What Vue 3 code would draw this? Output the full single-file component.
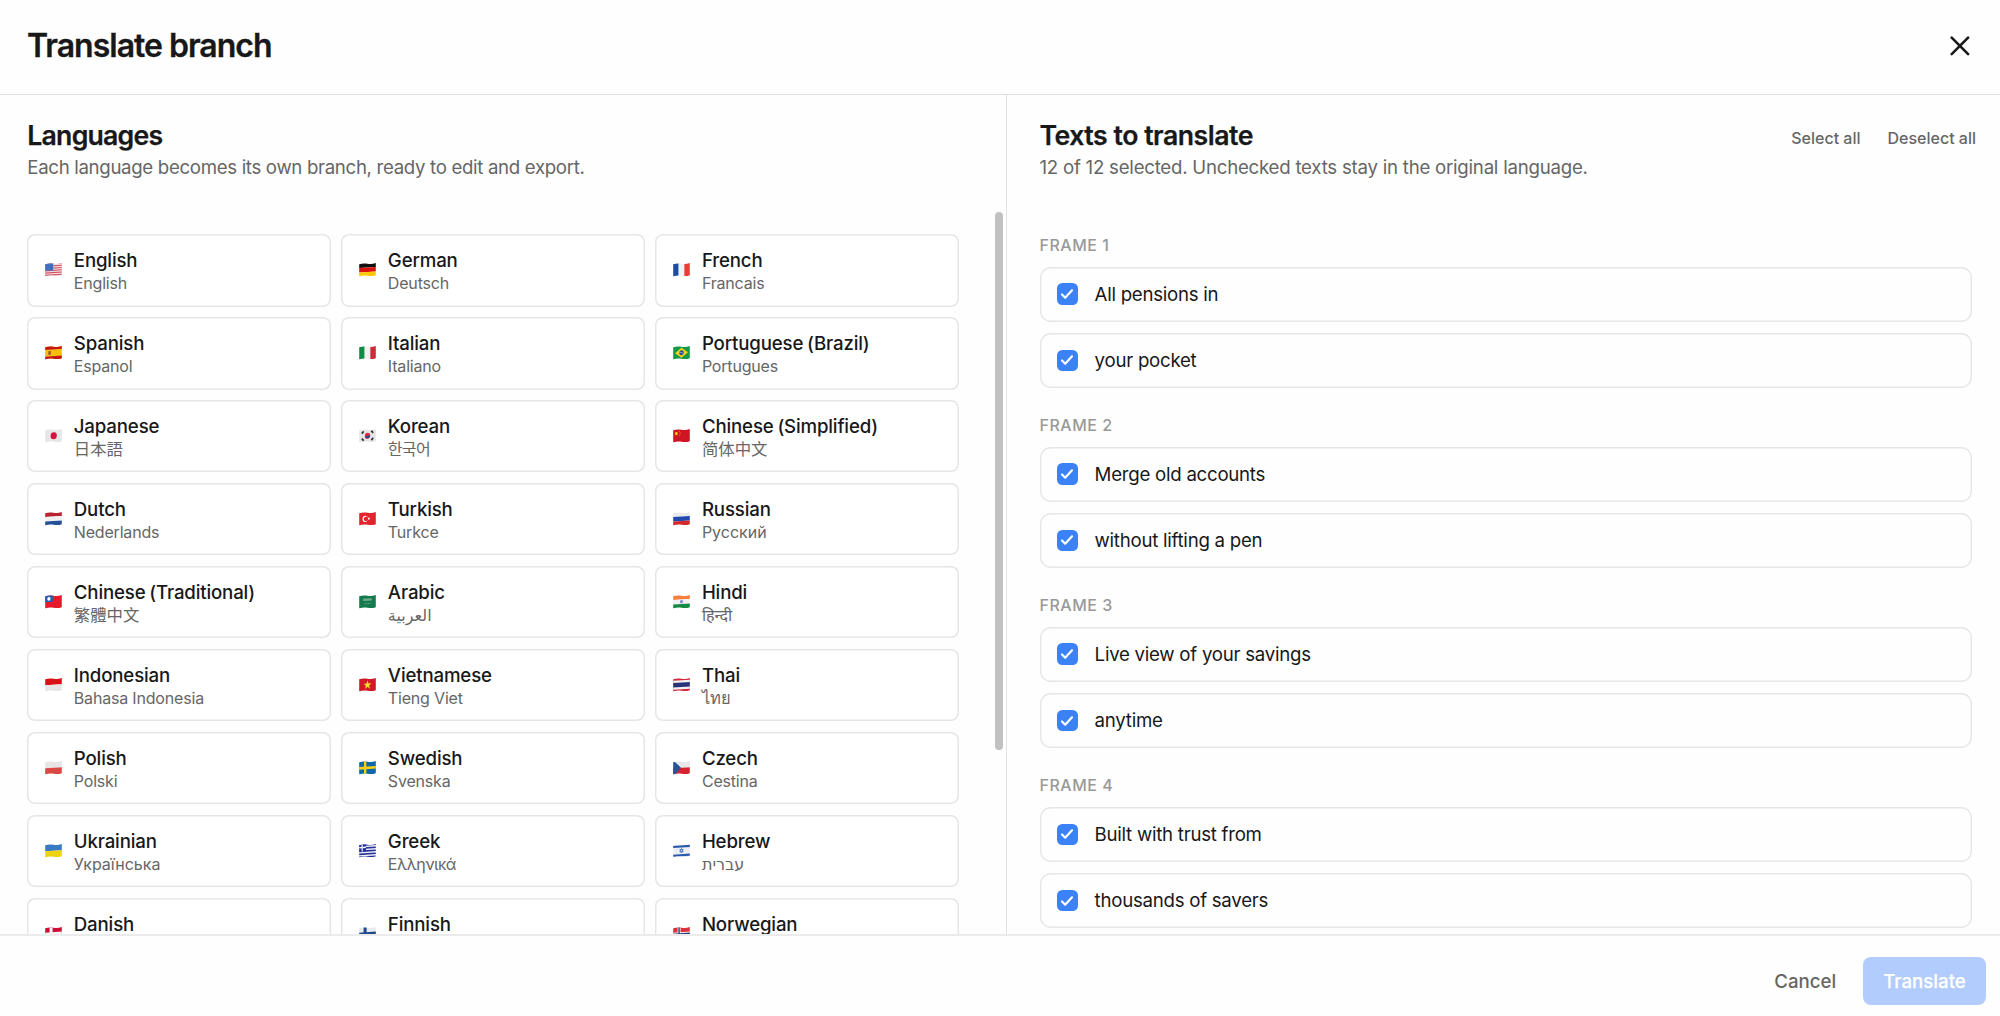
<script setup>
import { ref, computed } from 'vue'

const h = (...c) => c.map((fill, i) => ({ t: 'rect', x: -1, y: i ? (12 / c.length) * i : -3, width: 19, height: i === c.length - 1 ? 9 : 12 / c.length + (i ? 0 : 3), fill }))
const v = (...c) => c.map((fill, i) => ({ t: 'rect', x: (17 / c.length) * i, y: -3, width: 17 / c.length, height: 18, fill }))
const bg = (fill) => ({ t: 'rect', x: -1, y: -3, width: 19, height: 18, fill })
const r = (x, y, width, height, fill) => ({ t: 'rect', x, y, width, height, fill })
const dot = (cx, cy, rad, fill) => ({ t: 'circle', cx, cy, r: rad, fill })
const p = (d, fill, extra = {}) => ({ t: 'path', d, fill, ...extra })
const cross = (base, outer, inner) => [
  bg(base), r(4.6, -3, 3, 18, outer), r(-1, 4.6, 19, 3, outer),
  ...(inner ? [r(5.4, -3, 1.4, 18, inner), r(-1, 5.4, 19, 1.4, inner)] : []),
]
const star = 'M8.5 2.2l1 2.8h2.9l-2.300 1.800.9 2.900-2.500-1.800-2.500 1.800.9-2.900L4.600 5h2.900z'

const flags = {
  us: [bg('#efdfe2'), ...[0, 2, 4, 6, 8, 10].map((y) => r(-1, y, 19, 1, '#d8505f')), r(-1, -1, 9, 7.4, '#3c6db4'), ...[1, 3, 5].flatMap((y) => [1, 3, 5].map((x) => dot(x, y, 0.3, '#9db7dc')))],
  de: h('#111111', '#d9120f', '#fbc90b'),
  fr: v('#1c4da0', '#f1f1f3', '#ea3b35'),
  es: [bg('#f6bf0e'), r(-1, -3, 19, 6, '#c4161c'), r(-1, 9, 19, 5, '#c4161c'), r(3.2, 4.3, 2.8, 3.3, '#a8652a')],
  it: v('#118a48', '#f0f0f0', '#cc2b38'),
  br: [bg('#13994a'), p('M8.5 1.6L15 6l-6.5 4.4L2 6z', '#f7d414'), dot(8.5, 6, 2.3, '#2b4a9b'), p('M6.4 5.5q2.3 0 4.1 1.4', 'none', { stroke: '#dfe6f2', 'stroke-width': 0.5 })],
  jp: [bg('#e6e6e6'), dot(8.7, 6, 3.1, '#d4123f')],
  kr: [bg('#e6e6e6'), dot(8.5, 6, 2.7, '#d6303f'), p('M5.8 5.8q1.4 1.5 2.7.3t2.6.2A2.7 2.7 0 0 1 5.8 5.8z', '#1c4c9c'), p('M2.8 3.8l1.9-2M12.3 1.8l1.9 2M2.8 8.2l1.9 2M12.3 10.2l1.9-2', 'none', { stroke: '#333', 'stroke-width': 1.7 })],
  cn: [bg('#cf1524'), dot(3.3, 3.8, 1.4, '#f8cd21'), dot(6.2, 1.9, 0.45, '#f8cd21'), dot(7.1, 3.5, 0.45, '#f8cd21'), dot(6.7, 5.4, 0.45, '#f8cd21')],
  nl: h('#b8242f', '#f1f1f1', '#25509c'),
  tr: [bg('#e2242c'), dot(6.2, 6, 2.7, '#fff'), dot(7, 6, 2.15, '#e2242c'), dot(9.9, 6, 0.9, '#fff')],
  ru: h('#eaeaea', '#2148ae', '#d22a2b'),
  tw: [bg('#e8192c'), r(-1, -2, 8.8, 8, '#2460b8'), dot(3.9, 3.2, 1.6, '#fff')],
  sa: [bg('#157a4e'), r(4.2, 3.2, 8.6, 2, '#74ad92'), r(5.2, 7.4, 6.6, 0.7, '#5c9d80')],
  in: [...h('#f6803c', '#f1f1f1', '#168a45'), dot(8.5, 6, 1.5, '#8188c9')],
  id: h('#da1117', '#e6e6e6'),
  vn: [bg('#d01a27'), p(star, '#fcdf2b')],
  th: [bg('#d3283a'), r(-1, 2, 19, 8, '#f2f2f2'), r(-1, 4, 19, 4, '#28337a')],
  pl: h('#e6e6e6', '#dc4844'),
  se: [bg('#1068ab'), r(5, -3, 2.3, 18, '#fad010'), r(-1, 4.9, 19, 2.3, '#fad010')],
  cz: [...h('#e8e8e8', '#d62330'), p('M-1 -2.2L8 6l-9 8.2z', '#245595')],
  ua: h('#3a7ac5', '#f0d412'),
  gr: [bg('#eeeff7'), ...[0, 2.67, 5.33, 8, 10.67].map((y) => r(-1, y, 19, 1.5, '#26309a')), r(-1, -2, 8, 8.4, '#26309a'), r(2.6, -2, 1.2, 8.4, '#eeeff7'), r(-1, 2.2, 8, 1.2, '#eeeff7')],
  il: [bg('#eceef2'), r(-1, 1.2, 19, 1.9, '#2857ae'), r(-1, 9, 19, 1.9, '#2857ae'), p('M8.5 4l1.7 3H6.8zM8.5 8L6.8 5h3.4z', 'none', { stroke: '#2d62b8', 'stroke-width': 0.6 })],
  dk: cross('#cb1035', '#f5f5f5'),
  fi: cross('#e8eaec', '#1e4a8d'),
  no: cross('#dc2f3a', '#f4f4f4', '#24427f'),
}

const languages = [
  ['us', 'English', 'English'], ['de', 'German', 'Deutsch'], ['fr', 'French', 'Francais'],
  ['es', 'Spanish', 'Espanol'], ['it', 'Italian', 'Italiano'], ['br', 'Portuguese (Brazil)', 'Portugues'],
  ['jp', 'Japanese', '日本語', 'ja'], ['kr', 'Korean', '한국어', 'ko'], ['cn', 'Chinese (Simplified)', '简体中文', 'zh-Hans'],
  ['nl', 'Dutch', 'Nederlands'], ['tr', 'Turkish', 'Turkce'], ['ru', 'Russian', 'Русский', 'ru'],
  ['tw', 'Chinese (Traditional)', '繁體中文', 'zh-Hant'], ['sa', 'Arabic', 'العربية', 'ar'], ['in', 'Hindi', 'हिन्दी', 'hi'],
  ['id', 'Indonesian', 'Bahasa Indonesia'], ['vn', 'Vietnamese', 'Tieng Viet'], ['th', 'Thai', 'ไทย', 'th'],
  ['pl', 'Polish', 'Polski'], ['se', 'Swedish', 'Svenska'], ['cz', 'Czech', 'Cestina'],
  ['ua', 'Ukrainian', 'Українська', 'uk'], ['gr', 'Greek', 'Ελληνικά', 'el'], ['il', 'Hebrew', 'עברית', 'he'],
  ['dk', 'Danish', 'Dansk'], ['fi', 'Finnish', 'Suomi'], ['no', 'Norwegian', 'Norsk'],
].map(([code, name, native, lang = 'en']) => ({ code, name, native, lang }))

const frames = ref([
  ['All pensions in', 'your pocket'],
  ['Merge old accounts', 'without lifting a pen'],
  ['Live view of your savings', 'anytime'],
  ['Built with trust from', 'thousands of savers'],
  ['Track every pound', 'in one place'],
  ['Start today', 'in minutes'],
].map((texts) => texts.map((text) => ({ text, checked: true }))))

const all = computed(() => frames.value.flat())
const selected = computed(() => all.value.filter((t) => t.checked).length)
const setAll = (value) => all.value.forEach((t) => { t.checked = value })
</script>

<template>
  <div class="dialog">
    <header class="top">
      <h1>Translate branch</h1>
      <button class="close" aria-label="Close">
        <svg width="20" height="20" viewBox="0 0 20 20" fill="none" stroke="#18181a" stroke-width="2.6" stroke-linecap="round">
          <path d="M1.7 1.7L18.1 18.1M18.1 1.7L1.7 18.1" />
        </svg>
      </button>
    </header>

    <main class="body">
      <section class="left">
        <div class="head">
          <h2 class="h-lang">Languages</h2>
          <p class="d-lang">Each language becomes its own branch, ready to edit and export.</p>
        </div>
        <div class="scroller">
          <div class="grid">
            <div v-for="l in languages" :key="l.code" class="card">
              <svg class="flag" viewBox="0 0 17 12" preserveAspectRatio="none">
                <defs>
                  <clipPath :id="'wave-' + l.code">
                    <path d="M.2 1.1C3 .2 5.400 .2 8.500 .6S14 .8 16.800 0V10.900C14 11.800 11.600 11.800 8.500 11.400S3 11.200 .2 12z" />
                  </clipPath>
                </defs>
                <g :clip-path="`url(#wave-${l.code})`">
                  <g transform="translate(0 .5) skewY(-3.500)">
                    <component :is="s.t" v-for="(s, i) in flags[l.code]" :key="i" v-bind="{ ...s, t: undefined }" />
                  </g>
                </g>
              </svg>
              <div class="names">
                <span class="name">{{ l.name }}</span>
                <span class="native" :lang="l.lang">{{ l.native }}</span>
              </div>
            </div>
          </div>
          <div class="thumb"></div>
        </div>
      </section>

      <section class="right">
        <div class="head">
          <div class="head-row">
            <h2 class="h-texts">Texts to translate</h2>
            <div class="bulk">
              <button @click="setAll(true)">Select all</button>
              <button @click="setAll(false)">Deselect all</button>
            </div>
          </div>
          <p class="d-texts">{{ selected }} of {{ all.length }} selected. Unchecked texts stay in the original language.</p>
        </div>
        <div class="frames">
          <div v-for="(texts, f) in frames" :key="f" class="frame">
            <h3>FRAME {{ f + 1 }}</h3>
            <div v-for="t in texts" :key="t.text" class="text" @click="t.checked = !t.checked">
              <span class="box" :class="{ off: !t.checked }">
                <svg v-if="t.checked" width="14" height="12" viewBox="0 0 14 12" fill="none" stroke="#fff" stroke-width="2.200" stroke-linecap="round" stroke-linejoin="round">
                  <path d="M2 6.500L5.200 9.700L12 2.300" />
                </svg>
              </span>
              <span>{{ t.text }}</span>
            </div>
          </div>
        </div>
      </section>
    </main>

    <footer class="bottom">
      <button class="cancel">Cancel</button>
      <button class="translate">Translate</button>
    </footer>
  </div>
</template>

<style>
body { margin: 0; background: #fff; overflow: hidden; }
</style>

<style scoped>
.dialog {
  display: flex;
  flex-direction: column;
  height: 1016px;
  background: #fefefe;
  color: #18181a;
  font-family: Inter, "Noto Sans", "Noto Sans CJK SC", "DejaVu Sans", sans-serif;
}
h1, h2, h3, p { margin: 0; }
h1, h2, h3, p, .name, .native, .text, button { white-space: nowrap; }
button { padding: 0; border: 0; background: none; font-family: inherit; color: #666; cursor: pointer; }
.top {
  box-sizing: border-box;
  height: 95px;
  flex: none;
  display: flex;
  justify-content: space-between;
  align-items: center;
  padding: 0 30px 3px 27px;
  border-bottom: 1px solid #e0e0e0;
}
h1 { font-size: 32px; line-height: 40px; font-weight: 600; letter-spacing: -1px; -webkit-text-stroke: 0.300px currentColor; }
.close { display: flex; }
.body { flex: 1; min-height: 0; display: flex; }
.left {
  box-sizing: border-box;
  width: 1007px;
  display: flex;
  flex-direction: column;
  padding-left: 27.300px;
  border-right: 1px solid #e2e2e2;
}
.head { flex: none; box-sizing: border-box; height: 117px; padding-top: 23px; }
h2 { font-size: 26.670px; line-height: 34px; font-weight: 600; -webkit-text-stroke: 0.250px currentColor; }
.h-lang { letter-spacing: -0.780px; }
.h-texts { letter-spacing: -0.480px; }
.head p { font-size: 18.670px; line-height: 28px; margin-top: 2px; color: #666; }
.d-lang { letter-spacing: -0.330px; }
.d-texts { letter-spacing: -0.240px; }
.scroller { flex: 1; min-height: 0; overflow: hidden; display: flex; justify-content: space-between; padding-right: 3px; }
.grid {
  display: grid;
  grid-template-columns: repeat(3, 303.400px);
  grid-auto-rows: 72.330px;
  gap: 10.670px;
  padding-top: 22.200px;
}
.card {
  box-sizing: border-box;
  display: flex;
  align-items: center;
  padding: 1px 18px 0;
  box-shadow: inset 0 0 0 1.500px #e6e6e6;
  border-radius: 8px;
  background: #fff;
}
.flag { width: 17px; height: 13.500px; margin: 0 11.500px 1.500px 0; flex: none; }
.names { display: flex; flex-direction: column; }
.name { font-size: 18.670px; line-height: 25px; font-weight: 500; letter-spacing: -0.160px; word-spacing: -1px; }
.native { font-size: 16px; line-height: 21px; color: #666; }
.native[lang="en"] { letter-spacing: -0.180px; }
.native[lang="zh-Hans"] { font-size: 16.400px; }
.native[lang="zh-Hant"] { font-size: 16.400px; font-family: Inter, "Noto Sans CJK TC", sans-serif; }
.native[lang="ja"] { font-size: 16.400px; font-family: Inter, "Noto Sans CJK JP", sans-serif; }
.native[lang="ko"] { font-family: Inter, "Noto Sans CJK KR", sans-serif; letter-spacing: -0.700px; }
.native[lang="el"] { letter-spacing: -0.550px; }
.native[lang="th"] { font-size: 16.500px; font-weight: 500; }
.thumb { width: 8px; height: 538px; border-radius: 4px; background: #c1c1c1; }
.right { flex: 1; min-width: 0; display: flex; flex-direction: column; padding-left: 32.500px; }
.head-row { display: flex; justify-content: space-between; align-items: center; padding-right: 24px; }
.bulk { display: flex; gap: 27px; padding-top: 5px; }
.bulk button { font-size: 16px; line-height: 22px; font-weight: 500; }
.frames {
  flex: 1;
  min-height: 0;
  overflow: hidden;
  padding: 21.900px 28.300px 0 0;
}
.frame { height: 180.080px; }
h3 { font-size: 16px; line-height: 22px; font-weight: 500; color: #999; letter-spacing: 0.500px; padding-bottom: 10.700px; }
.text {
  box-sizing: border-box;
  height: 55px;
  margin-bottom: 11.330px;
  display: flex;
  align-items: center;
  padding-left: 17px;
  box-shadow: inset 0 0 0 1.400px #e6e6e6;
  border-radius: 10.670px;
  font-size: 18.670px;
  letter-spacing: -0.260px;
}
.box {
  width: 21.600px;
  height: 21.600px;
  margin-right: 16.500px;
  border-radius: 5.300px;
  background: #3b82f6;
  display: flex;
  align-items: center;
  justify-content: center;
}
.box.off { background: #fff; box-shadow: inset 0 0 0 1px #d4d4d4; }
.bottom {
  box-sizing: border-box;
  height: 82px;
  flex: none;
  display: flex;
  align-items: center;
  justify-content: flex-end;
  gap: 26.500px;
  padding: 10px 13.700px 0 0;
  border-top: 2px solid #ebebeb;
}
.cancel, .translate { font-size: 18.670px; line-height: 26px; font-weight: 500; }
.cancel { padding-top: 1px; }
.translate { width: 123.600px; height: 48px; padding-top: 1px; border-radius: 8px; background: #b1ccfd; color: #fff; -webkit-text-stroke: 0.250px currentColor; }
</style>
